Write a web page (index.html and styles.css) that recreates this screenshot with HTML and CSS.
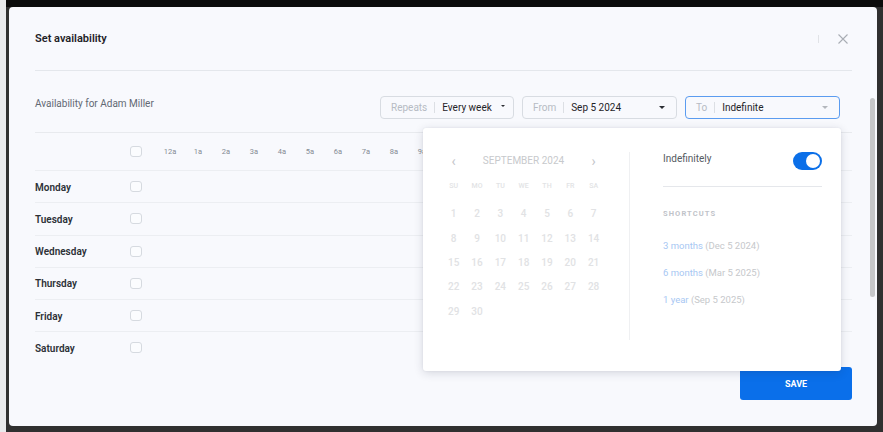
FILE: index.html
```html
<!DOCTYPE html>
<html lang="en">
<head>
<meta charset="utf-8">
<title>Set availability</title>
<link rel="stylesheet" href="styles.css">
</head>
<body>
<div class="modal">
  <header class="modal-header">
    <h1 class="title">Set availability</h1>
    <div class="header-actions">
      <span class="vsep"></span>
      <button class="close" aria-label="Close">
        <svg width="10" height="10" viewBox="0 0 10 10"><path d="M0.5 0.5 L9.5 9.5 M9.5 0.5 L0.5 9.5" stroke="#a9adb4" stroke-width="1.1" fill="none"/></svg>
      </button>
    </div>
  </header>

  <div class="modal-body">
    <div class="toolbar">
      <div class="who">Availability for Adam Miller</div>
      <div class="filters">
        <div class="select sel-repeats">
          <span class="lbl">Repeats</span><span class="val">Every week</span><span class="caret caret-small"></span>
        </div>
        <div class="select sel-from">
          <span class="lbl">From</span><span class="val">Sep 5 2024</span><span class="caret caret-dark"></span>
        </div>
        <div class="select sel-to">
          <span class="lbl">To</span><span class="val">Indefinite</span><span class="caret caret-light"></span>
        </div>

        <div class="popover">
          <div class="cal">
            <div class="cal-head">
              <span class="arrow">&#8249;</span>
              <span class="month">SEPTEMBER 2024</span>
              <span class="arrow">&#8250;</span>
            </div>
            <div class="cal-dow">
              <span>SU</span><span>MO</span><span>TU</span><span>WE</span><span>TH</span><span>FR</span><span>SA</span>
            </div>
            <div class="cal-days">
              <span>1</span><span>2</span><span>3</span><span>4</span><span>5</span><span>6</span><span>7</span>
              <span>8</span><span>9</span><span>10</span><span>11</span><span>12</span><span>13</span><span>14</span>
              <span>15</span><span>16</span><span>17</span><span>18</span><span>19</span><span>20</span><span>21</span>
              <span>22</span><span>23</span><span>24</span><span>25</span><span>26</span><span>27</span><span>28</span>
              <span>29</span><span>30</span>
            </div>
          </div>
          <div class="side">
            <div class="indef">
              <span class="indef-label">Indefinitely</span>
              <span class="toggle"><span class="knob"></span></span>
            </div>
            <div class="shortcuts-title">SHORTCUTS</div>
            <ul class="shortcuts">
              <li><span class="link">3 months</span> <span class="hint">(Dec 5 2024)</span></li>
              <li><span class="link">6 months</span> <span class="hint">(Mar 5 2025)</span></li>
              <li><span class="link">1 year</span> <span class="hint">(Sep 5 2025)</span></li>
            </ul>
          </div>
        </div>
      </div>
    </div>

    <div class="grid">
      <div class="grid-row grid-head">
        <div class="day"></div>
        <span class="cb"></span>
        <div class="hours">
          <span>12a</span><span>1a</span><span>2a</span><span>3a</span><span>4a</span><span>5a</span><span>6a</span><span>7a</span><span>8a</span><span>9a</span>
        </div>
      </div>
      <div class="grid-row"><div class="day">Monday</div><span class="cb"></span></div>
      <div class="grid-row"><div class="day">Tuesday</div><span class="cb"></span></div>
      <div class="grid-row"><div class="day">Wednesday</div><span class="cb"></span></div>
      <div class="grid-row"><div class="day">Thursday</div><span class="cb"></span></div>
      <div class="grid-row"><div class="day">Friday</div><span class="cb"></span></div>
      <div class="grid-row last"><div class="day">Saturday</div><span class="cb"></span></div>
    </div>
  </div>

  <footer class="modal-footer">
    <button class="save">SAVE</button>
  </footer>

  <div class="scroll-thumb"></div>
</div>
</body>
</html>
```

FILE: styles.css
```css
html {
  background: #303030;
}

body {
  margin: 0;
  padding: 7px 0 0 9px;
  height: 432px;
  box-sizing: border-box;
  overflow: hidden;
  font-family: Roboto, "Liberation Sans", Arial, sans-serif;
  background:
    linear-gradient(to right, #e9eaec 0 6px, transparent 6px),
    linear-gradient(#0c0c0c 0 7px, #303030 7px);
}

.modal {
  position: relative;
  width: 868px;
  height: 419px;
  background: #f8f9fd;
  border-radius: 4px;
  display: flex;
  flex-direction: column;
}

/* header */
.modal-header {
  height: 63px;
  margin: 0 25px 0 26px;
  border-bottom: 1px solid #e4e7ec;
  display: flex;
  align-items: center;
  justify-content: space-between;
}

.title {
  margin: 0;
  font-size: 11px;
  font-weight: 600;
  color: #1e2227;
}

.header-actions {
  display: flex;
  align-items: center;
  gap: 15px;
}

.vsep {
  width: 1px;
  height: 8px;
  background: #e1e3e7;
}

.close {
  width: 18px;
  height: 14px;
  padding: 0;
  border: 0;
  background: none;
  display: flex;
  align-items: center;
  justify-content: center;
}

/* body */
.modal-body {
  position: relative;
  z-index: 2;
  flex: 1;
  margin: 0 25px 0 26px;
}

.toolbar {
  display: flex;
  justify-content: space-between;
  align-items: flex-start;
  padding: 25px 12px 13px 0;
  border-bottom: 1px solid #e8eaee;
}

.who {
  font-size: 10px;
  line-height: 12px;
  margin-top: 2px;
  color: #626873;
}

.filters {
  position: relative;
  display: flex;
  gap: 8px;
}

.select {
  height: 23px;
  box-sizing: border-box;
  border: 1px solid #d8dce2;
  border-radius: 4px;
  display: flex;
  align-items: center;
  padding: 0 11px 0 10px;
  font-size: 10px;
  white-space: nowrap;
}

.sel-repeats { width: 134px; padding-right: 8px; }
.sel-from { width: 155px; }
.sel-to { width: 155px; border-color: #5b9cf0; }

.lbl {
  color: #b6bbc3;
  padding-right: 7px;
  border-right: 1px solid #dcdfe4;
  line-height: 11px;
}

.val {
  margin-left: 7px;
  color: #1f2328;
}

.caret {
  flex: none;
  width: 0;
  height: 0;
  border-left: 3px solid transparent;
  border-right: 3px solid transparent;
  border-top: 3.5px solid #2a2d33;
  margin-left: auto;
}

.caret-small {
  border-left-width: 2px;
  border-right-width: 2px;
  border-top-width: 2.5px;
  margin-left: 9px;
  margin-bottom: 3px;
}

.caret-light {
  border-top-color: #b3b7bd;
}

/* popover */
.popover {
  position: absolute;
  top: 32px;
  right: -1px;
  width: 418px;
  height: 243px;
  background: #fff;
  border-radius: 3px;
  box-shadow: 0 2px 10px rgba(30, 40, 60, 0.16), 0 0 2px rgba(30, 40, 60, 0.08);
  display: flex;
  z-index: 5;
}

.cal {
  width: 206px;
  box-sizing: border-box;
  padding: 23px 24px 0 19px;
}

.cal-head {
  height: 20px;
  display: flex;
  align-items: center;
  justify-content: space-between;
}

.arrow {
  width: 23px;
  text-align: center;
  font-size: 14px;
  color: #c3c5c9;
  line-height: 14px;
}

.month {
  font-size: 10px;
  line-height: 12px;
  color: #c7c9cc;
}

.cal-dow {
  margin-top: 9px;
  display: grid;
  grid-template-columns: repeat(7, 23.33px);
  height: 12px;
  align-items: center;
}

.cal-dow span {
  text-align: center;
  font-size: 7px;
  line-height: 9px;
  font-weight: 500;
  color: #e2e3e5;
}

.cal-days {
  margin-top: 10px;
  display: grid;
  grid-template-columns: repeat(7, 23.33px);
  grid-auto-rows: 24.4px;
  align-items: center;
}

.cal-days span {
  text-align: center;
  font-size: 10px;
  line-height: 12px;
  font-weight: 500;
  color: #e1e2e4;
}

.side {
  flex: 1;
  margin: 24px 0 31px;
  border-left: 1px solid #eff0f2;
  padding: 0 19px 0 33px;
}

.indef {
  display: flex;
  align-items: flex-start;
  justify-content: space-between;
  height: 18px;
  padding-bottom: 16px;
  border-bottom: 1px solid #e5e7eb;
  font-size: 10px;
  color: #555a62;
}

.indef-label {
  line-height: 12px;
  margin-top: 1px;
}

.toggle {
  width: 29px;
  height: 18px;
  box-sizing: border-box;
  border-radius: 9px;
  background: #0b6fe8;
  padding: 2px;
  display: flex;
  justify-content: flex-end;
}

.knob {
  width: 14px;
  height: 14px;
  border-radius: 50%;
  background: #fff;
}

.shortcuts-title {
  margin-top: 22px;
  font-size: 7.5px;
  line-height: 9px;
  font-weight: 700;
  letter-spacing: 1.1px;
  color: #bfc3c9;
}

.shortcuts {
  list-style: none;
  margin: 22px 0 0;
  padding: 0;
}

.shortcuts li {
  height: 26.8px;
  line-height: 12px;
  font-size: 9.5px;
}

.link { color: #a7c7f3; }
.hint { color: #c6c8cb; }

/* grid */
.grid-row {
  display: flex;
  align-items: center;
  height: 31.25px;
  border-bottom: 1px solid #eceef2;
}

.grid-row.last { border-bottom: 0; }

.grid-head {
  height: 37px;
}

.day {
  width: 95px;
  font-size: 10px;
  line-height: 12px;
  margin-top: 2px;
  font-weight: 600;
  color: #2c3036;
}

.cb {
  width: 12px;
  height: 11px;
  box-sizing: border-box;
  border: 1px solid #d6dae0;
  border-radius: 3px;
  background: #fbfcfe;
}

.hours {
  margin-left: 14px;
  display: flex;
}

.hours span {
  width: 28px;
  text-align: center;
  font-size: 7.5px;
  color: #858b94;
}

/* footer */
.modal-footer {
  position: relative;
  z-index: 1;
  display: flex;
  justify-content: flex-end;
  padding: 0 25px 26px 0;
}

.save {
  width: 112px;
  height: 33px;
  border: 0;
  border-radius: 3px;
  background: #0a6fea;
  color: #fff;
  font-family: Roboto, "Liberation Sans", Arial, sans-serif;
  font-size: 9px;
  font-weight: 700;
}

.scroll-thumb {
  position: absolute;
  right: 2px;
  top: 91px;
  width: 5px;
  height: 199px;
  border-radius: 3px;
  background: #c6c7c9;
}
```
